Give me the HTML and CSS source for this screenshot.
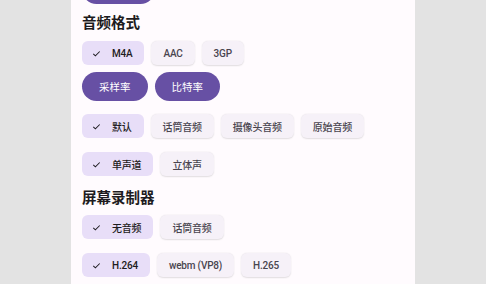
FILE: index.html
```html
<!DOCTYPE html>
<html>
<head>
<meta charset="utf-8">
<link rel="stylesheet" href="styles.css">
</head>
<body>
<div class="panel">
  <div class="row btns top"><span class="btn wide"></span></div>
  <div class="heading h1">音频格式</div>
  <div class="row r1">
    <span class="chip sel"><svg class="ck" viewBox="0 0 12 12"><path d="M2.5 6.3 L4.8 8.5 L9.5 3.8" fill="none" stroke="#1d1b20" stroke-width="1.1"/></svg>M4A</span>
    <span class="chip">AAC</span>
    <span class="chip">3GP</span>
  </div>
  <div class="row btns r2">
    <span class="btn">采样率</span>
    <span class="btn">比特率</span>
  </div>
  <div class="row r3">
    <span class="chip sel"><svg class="ck" viewBox="0 0 12 12"><path d="M2.5 6.3 L4.8 8.5 L9.5 3.8" fill="none" stroke="#1d1b20" stroke-width="1.1"/></svg>默认</span>
    <span class="chip">话筒音频</span>
    <span class="chip">摄像头音频</span>
    <span class="chip">原始音频</span>
  </div>
  <div class="row r4">
    <span class="chip sel"><svg class="ck" viewBox="0 0 12 12"><path d="M2.5 6.3 L4.8 8.5 L9.5 3.8" fill="none" stroke="#1d1b20" stroke-width="1.1"/></svg>单声道</span>
    <span class="chip">立体声</span>
  </div>
  <div class="heading h2">屏幕录制器</div>
  <div class="row r5">
    <span class="chip sel"><svg class="ck" viewBox="0 0 12 12"><path d="M2.5 6.3 L4.8 8.5 L9.5 3.8" fill="none" stroke="#1d1b20" stroke-width="1.1"/></svg>无音频</span>
    <span class="chip">话筒音频</span>
  </div>
  <div class="row r6">
    <span class="chip sel"><svg class="ck" viewBox="0 0 12 12"><path d="M2.5 6.3 L4.8 8.5 L9.5 3.8" fill="none" stroke="#1d1b20" stroke-width="1.1"/></svg>H.264</span>
    <span class="chip">webm (VP8)</span>
    <span class="chip">H.265</span>
  </div>
</div>
</body>
</html>
```
FILE: styles.css
```css
html, body {
  margin: 0;
  padding: 0;
  background: #e3e3e3;
  height: 100%;
  overflow: hidden;
}
body {
  font-family: Roboto, "Noto Sans CJK SC", sans-serif;
  color: #1d1b20;
}
.panel {
  margin-left: 71px;
  width: 333px;
  height: 284px;
  padding-left: 11px;
  background: #fffbfe;
  display: flex;
  flex-direction: column;
}
.row {
  display: flex;
  gap: 7px;
}
.top { margin-top: -25px; }
.heading {
  font-family: "Noto Sans CJK SC", sans-serif;
  font-size: 14.5px;
  font-weight: 700;
  line-height: 20px;
  height: 20px;
  color: #1d1b20;
}
.h1 { margin-top: 8px; }
.r1 { margin-top: 9px; }
.r2 { margin-top: 7px; }
.r3 { margin-top: 13px; }
.r4 { margin-top: 14px; }
.h2 { margin-top: 11px; }
.r5 { margin-top: 8px; }
.r6 { margin-top: 14px; }
.chip {
  height: 24px;
  box-sizing: border-box;
  display: inline-flex;
  align-items: center;
  padding: 0 12px;
  border-radius: 6px;
  background: #f6f1f8;
  box-shadow: 0 0.5px 1.5px rgba(0,0,0,0.12);
  font-size: 10px;
  font-weight: 500;
  letter-spacing: -0.2px;
  color: #49454f;
  white-space: nowrap;
}
.chip.sel {
  background: #e8def8;
  color: #1d1b20;
  padding-left: 9px;
  box-shadow: none;
}
.ck {
  width: 11px;
  height: 11px;
  margin-right: 10px;
}
.btn {
  height: 29px;
  box-sizing: border-box;
  display: inline-flex;
  align-items: center;
  justify-content: center;
  padding: 0 17px;
  border-radius: 15px;
  background: #6750a4;
  color: #ffffff;
  font-size: 10.5px;
  font-weight: 400;
  white-space: nowrap;
}
.btn.wide { width: 73px; }
```
